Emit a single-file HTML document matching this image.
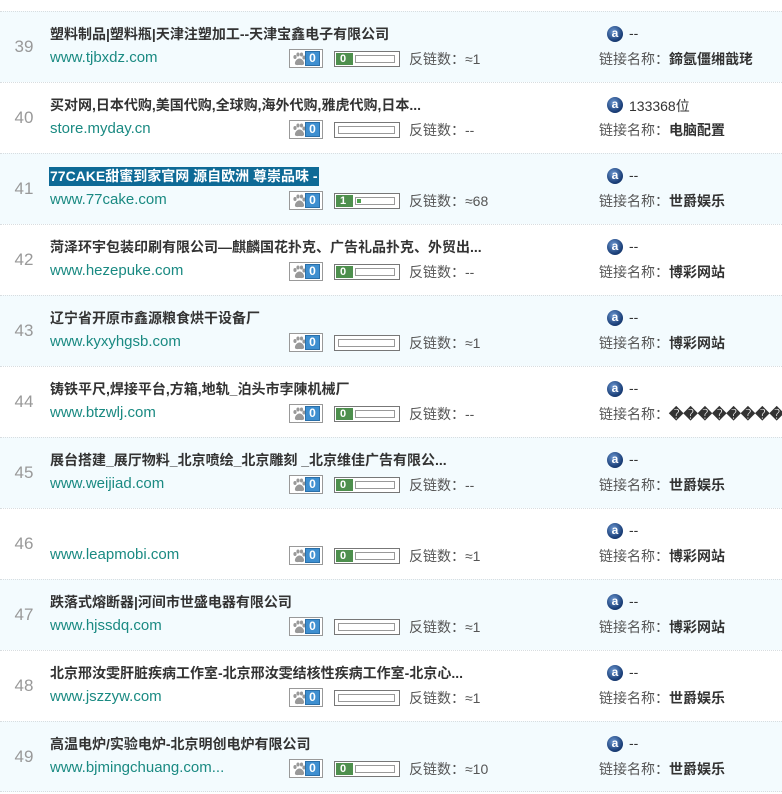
<!DOCTYPE html><html><head><meta charset="utf-8"><style>
body{margin:0;width:782px;height:794px;background:#fff;font-family:"Liberation Sans","Noto Sans CJK SC",sans-serif;position:relative;overflow:hidden}
.r{position:absolute;left:0;width:782px;height:71px;border-top:1px dotted #d8dde0;box-sizing:border-box}
.r.a{background:#f3fbfe}
.n{position:absolute;left:10px;width:28px;text-align:center;top:25px;font-size:17px;color:#999}
.t{position:absolute;left:50px;top:13px;font-size:14px;font-weight:bold;color:#333;white-space:nowrap;line-height:19px}
.t.h{background:#0e6a96;color:#fff;padding:0 1px;left:49px}
.u{position:absolute;left:50px;top:37px;font-size:15px;color:#1a8a82}
.bd{position:absolute;left:289px;top:37px;width:32px;height:17px;border:1px solid #999;background:#fff}
.bd svg{position:absolute;left:2px;top:2px}
.bd .z{position:absolute;left:15px;top:1px;width:15px;height:15px;background:#3e8fd0;border:1px solid #2a6fa8;box-sizing:border-box;color:#fff;font-size:12px;font-weight:bold;text-align:center;line-height:13px}
.bar{position:absolute;left:334px;top:39px;width:64px;height:14px;border:1px solid #777;background:#fff}
.bar .g{position:absolute;left:1px;top:1px;width:17px;height:12px;background:#4d8f4d;color:#fff;font-size:11px;font-weight:bold;line-height:12px;padding-left:4px;box-sizing:border-box}
.bar .e{position:absolute;left:20px;top:3px;width:40px;height:8px;border:1px solid #999;box-sizing:border-box}
.bar.x .e{left:3px;width:57px}
.bar .d{position:absolute;left:1px;top:1px;width:4px;height:4px;background:#4d9f4d}
.fl{position:absolute;left:409px;top:37px;font-size:14px;color:#555}
.al{position:absolute;left:607px;top:14px;width:16px;height:16px;border-radius:50%;background:radial-gradient(circle at 40% 35%,#6a96d0,#1b3f78 65%,#0c2550);color:#fff;font-size:12px;font-weight:bold;text-align:center;line-height:15px}
.at{position:absolute;left:629px;top:13px;font-size:14px;color:#333}
.ln{position:absolute;left:599px;top:37px;font-size:14px;color:#555;white-space:nowrap}
.ln b{color:#333}
</style></head><body>
<svg width="0" height="0" style="position:absolute"><defs><g id="paw" fill="#999"><ellipse cx="3" cy="5" rx="1.6" ry="2"/><ellipse cx="6" cy="2.5" rx="1.6" ry="2"/><ellipse cx="9.5" cy="2.5" rx="1.6" ry="2"/><ellipse cx="12" cy="5.5" rx="1.6" ry="2"/><path d="M7.5 6.5c-3 0-5 3.5-4.5 5.5 0.5 1.5 3 1 4.5 1s4 0.5 4.5-1c0.5-2-1.5-5.5-4.5-5.5z"/></g></defs></svg>

<div class="r a" style="top:11px"><div class="n">39</div><div class="t">塑料制品|塑料瓶|天津注塑加工--天津宝鑫电子有限公司</div><div class="u">www.tjbxdz.com</div><div class="bd"><svg width="14" height="14"><use href="#paw"/></svg><span class="z">0</span></div><div class="bar"><div class="g">0</div><div class="e"></div></div><div class="fl">反链数：≈1</div><div class="al">a</div><div class="at">--</div><div class="ln">链接名称：<b>鍗氬僵缃戠珯</b></div></div>

<div class="r" style="top:82px"><div class="n">40</div><div class="t">买对网,日本代购,美国代购,全球购,海外代购,雅虎代购,日本...</div><div class="u">store.myday.cn</div><div class="bd"><svg width="14" height="14"><use href="#paw"/></svg><span class="z">0</span></div><div class="bar x"><div class="e"></div></div><div class="fl">反链数：--</div><div class="al">a</div><div class="at">133368位</div><div class="ln">链接名称：<b>电脑配置</b></div></div>

<div class="r a" style="top:153px"><div class="n">41</div><div class="t h">77CAKE甜蜜到家官网 源自欧洲 尊崇品味 -</div><div class="u">www.77cake.com</div><div class="bd"><svg width="14" height="14"><use href="#paw"/></svg><span class="z">0</span></div><div class="bar"><div class="g">1</div><div class="e"><div class="d"></div></div></div><div class="fl">反链数：≈68</div><div class="al">a</div><div class="at">--</div><div class="ln">链接名称：<b>世爵娱乐</b></div></div>

<div class="r" style="top:224px"><div class="n">42</div><div class="t">菏泽环宇包装印刷有限公司—麒麟国花扑克、广告礼品扑克、外贸出...</div><div class="u">www.hezepuke.com</div><div class="bd"><svg width="14" height="14"><use href="#paw"/></svg><span class="z">0</span></div><div class="bar"><div class="g">0</div><div class="e"></div></div><div class="fl">反链数：--</div><div class="al">a</div><div class="at">--</div><div class="ln">链接名称：<b>博彩网站</b></div></div>

<div class="r a" style="top:295px"><div class="n">43</div><div class="t">辽宁省开原市鑫源粮食烘干设备厂</div><div class="u">www.kyxyhgsb.com</div><div class="bd"><svg width="14" height="14"><use href="#paw"/></svg><span class="z">0</span></div><div class="bar x"><div class="e"></div></div><div class="fl">反链数：≈1</div><div class="al">a</div><div class="at">--</div><div class="ln">链接名称：<b>博彩网站</b></div></div>

<div class="r" style="top:366px"><div class="n">44</div><div class="t">铸铁平尺,焊接平台,方箱,地轨_泊头市孛陳机械厂</div><div class="u">www.btzwlj.com</div><div class="bd"><svg width="14" height="14"><use href="#paw"/></svg><span class="z">0</span></div><div class="bar"><div class="g">0</div><div class="e"></div></div><div class="fl">反链数：--</div><div class="al">a</div><div class="at">--</div><div class="ln">链接名称：<b>���������</b></div></div>

<div class="r a" style="top:437px"><div class="n">45</div><div class="t">展台搭建_展厅物料_北京喷绘_北京雕刻 _北京维佳广告有限公...</div><div class="u">www.weijiad.com</div><div class="bd"><svg width="14" height="14"><use href="#paw"/></svg><span class="z">0</span></div><div class="bar"><div class="g">0</div><div class="e"></div></div><div class="fl">反链数：--</div><div class="al">a</div><div class="at">--</div><div class="ln">链接名称：<b>世爵娱乐</b></div></div>

<div class="r" style="top:508px"><div class="n">46</div><div class="u">www.leapmobi.com</div><div class="bd"><svg width="14" height="14"><use href="#paw"/></svg><span class="z">0</span></div><div class="bar"><div class="g">0</div><div class="e"></div></div><div class="fl">反链数：≈1</div><div class="al">a</div><div class="at">--</div><div class="ln">链接名称：<b>博彩网站</b></div></div>

<div class="r a" style="top:579px"><div class="n">47</div><div class="t">跌落式熔断器|河间市世盛电器有限公司</div><div class="u">www.hjssdq.com</div><div class="bd"><svg width="14" height="14"><use href="#paw"/></svg><span class="z">0</span></div><div class="bar x"><div class="e"></div></div><div class="fl">反链数：≈1</div><div class="al">a</div><div class="at">--</div><div class="ln">链接名称：<b>博彩网站</b></div></div>

<div class="r" style="top:650px"><div class="n">48</div><div class="t">北京邢汝雯肝脏疾病工作室-北京邢汝雯结核性疾病工作室-北京心...</div><div class="u">www.jszzyw.com</div><div class="bd"><svg width="14" height="14"><use href="#paw"/></svg><span class="z">0</span></div><div class="bar x"><div class="e"></div></div><div class="fl">反链数：≈1</div><div class="al">a</div><div class="at">--</div><div class="ln">链接名称：<b>世爵娱乐</b></div></div>

<div class="r a" style="top:721px;border-bottom:1px dotted #d8dde0"><div class="n">49</div><div class="t">高温电炉/实验电炉-北京明创电炉有限公司</div><div class="u">www.bjmingchuang.com...</div><div class="bd"><svg width="14" height="14"><use href="#paw"/></svg><span class="z">0</span></div><div class="bar"><div class="g">0</div><div class="e"></div></div><div class="fl">反链数：≈10</div><div class="al">a</div><div class="at">--</div><div class="ln">链接名称：<b>世爵娱乐</b></div></div>

</body></html>
